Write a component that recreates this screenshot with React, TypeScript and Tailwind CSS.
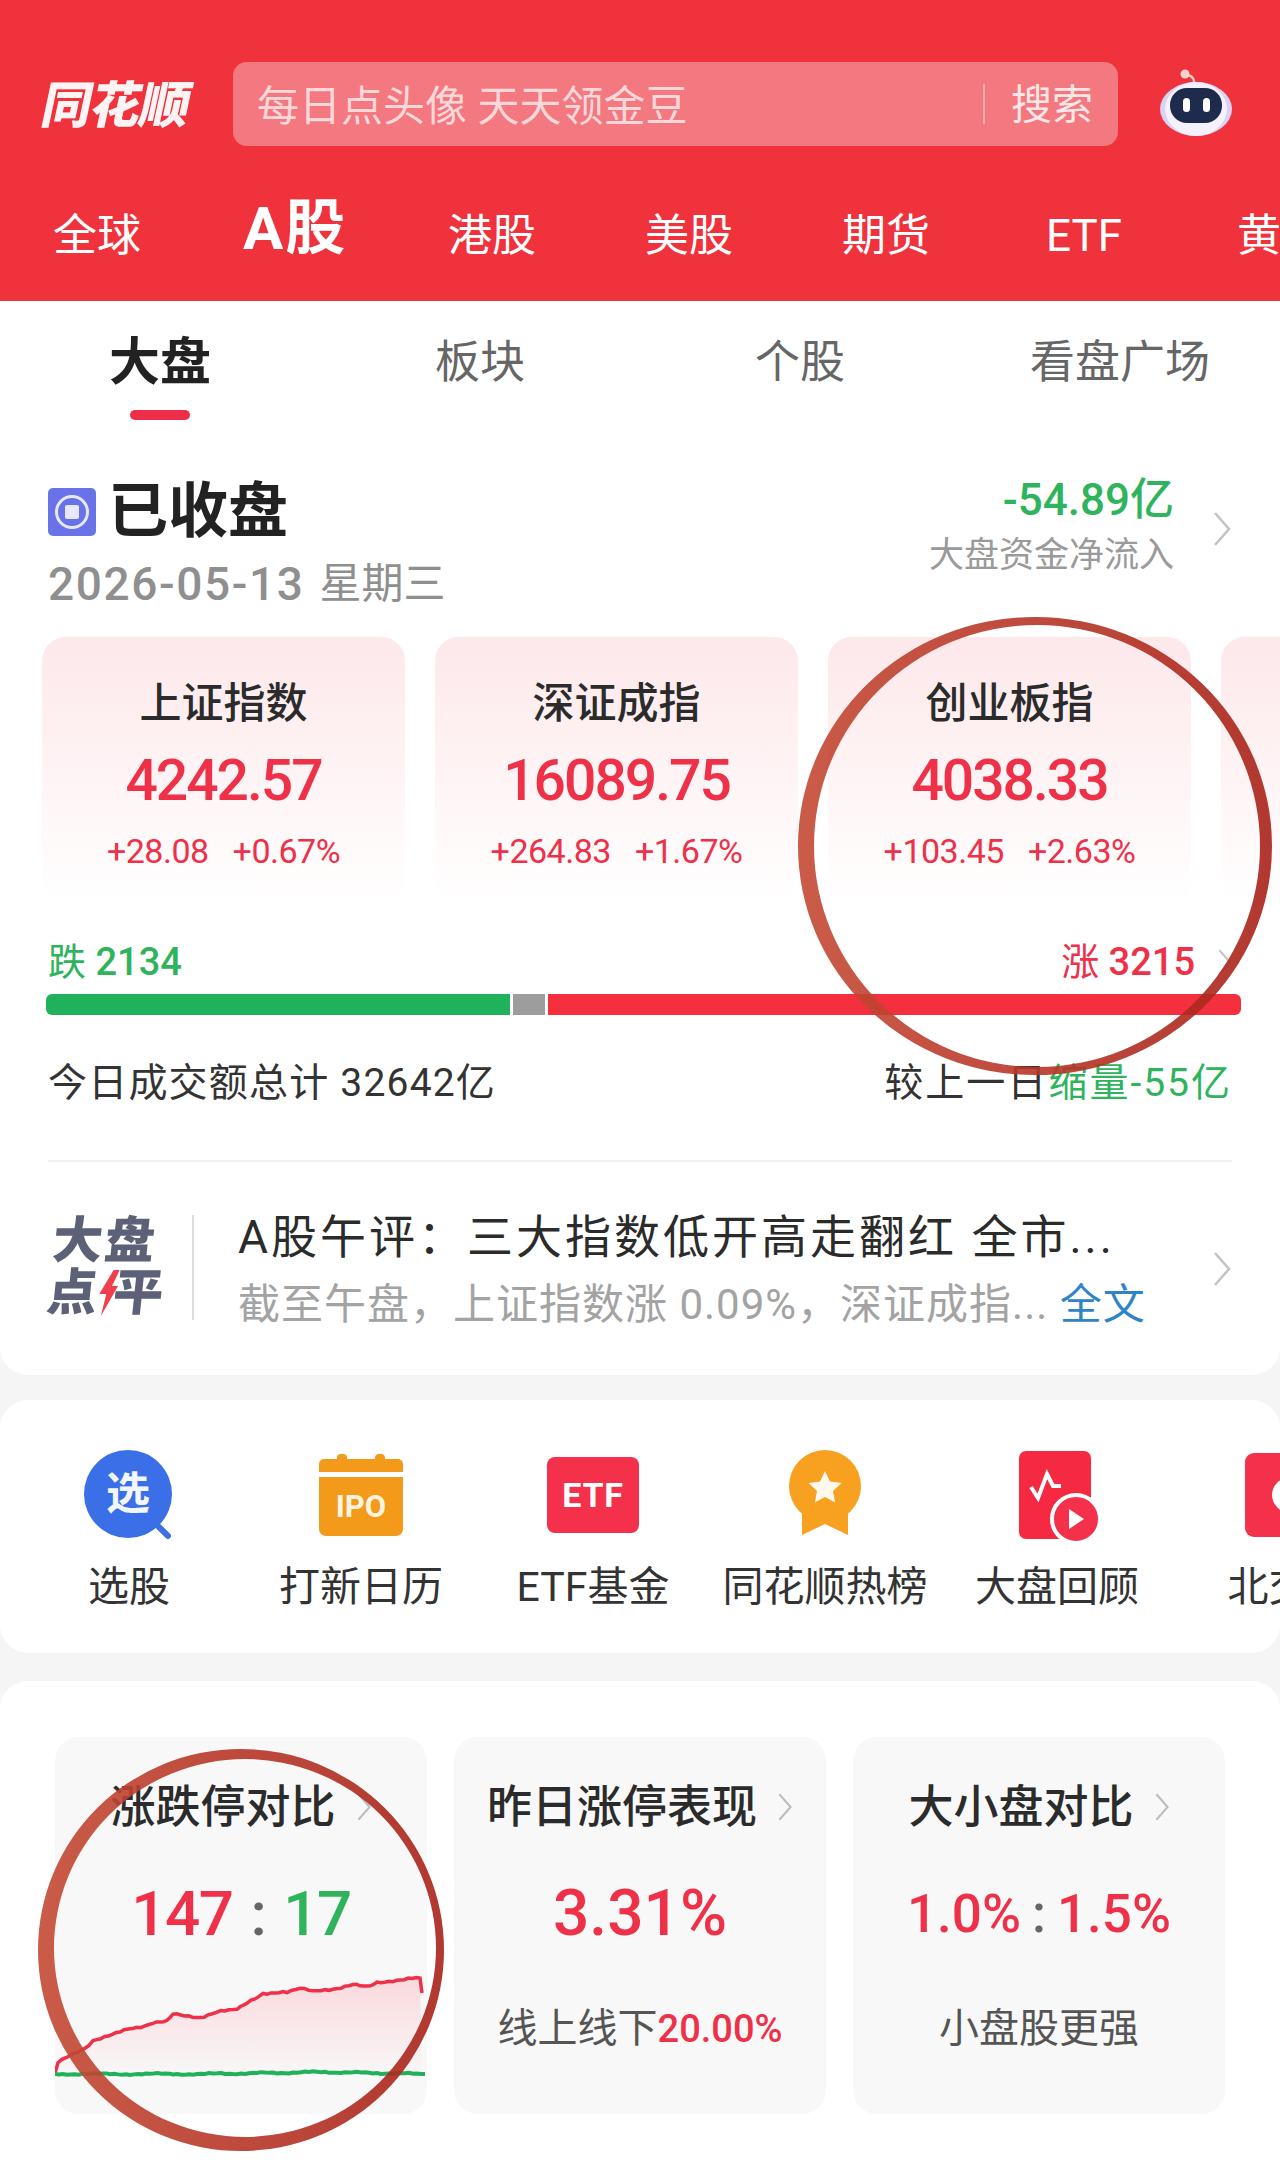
import type { ReactNode } from "react";

const red = "text-[#ee3048]";
const green = "text-[#2fb35c]";

const markets = [
  { label: "全球", cls: "ml-[53px] w-[89px] text-[44px]" },
  { label: "A股", cls: "ml-[101px] w-[105px] text-[60px] font-bold -mt-[14px] tracking-[2px]" },
  { label: "港股", cls: "ml-[100px] w-[89px] text-[44px]" },
  { label: "美股", cls: "ml-[108px] w-[89px] text-[44px]" },
  { label: "期货", cls: "ml-[108px] w-[89px] text-[44px]" },
  { label: "ETF", cls: "ml-[115px] w-[78px] text-[44px]" },
  { label: "黄金", cls: "ml-[113px] w-[89px] text-[44px]" },
];

const indexes = [
  { name: "上证指数", value: "4242.57", diff: "+28.08", pct: "+0.67%" },
  { name: "深证成指", value: "16089.75", diff: "+264.83", pct: "+1.67%" },
  { name: "创业板指", value: "4038.33", diff: "+103.45", pct: "+2.63%" },
  { name: "", value: "", diff: "", pct: "" },
];

// key points of the limit-up curve, jittered so it looks like real tick data
const limitUp = [
  [0, 103], [3, 93], [15, 85], [30, 78], [38, 70], [65, 62], [98, 53], [112, 50], [118, 44], [145, 47],
  [182, 38], [192, 33], [208, 23], [232, 23], [245, 17], [258, 22], [298, 15], [312, 16], [322, 12], [365, 8],
];

function jitter(points: number[][], amount: number) {
  const out: number[][] = [];
  for (let i = 0; i < points.length - 1; i++) {
    const [x1, y1] = points[i];
    const [x2, y2] = points[i + 1];
    const steps = Math.max(1, Math.round((x2 - x1) / 4));
    for (let s = 0; s < steps; s++) {
      const x = x1 + ((x2 - x1) * s) / steps;
      const y = y1 + ((y2 - y1) * s) / steps;
      out.push([x, y + Math.sin(x * 1.7) * amount + Math.sin(x * 0.6) * amount * 0.6]);
    }
  }
  out.push(points[points.length - 1]);
  return out;
}

function Chevron({ className, color = "#bdbdbd" }: { className: string; color?: string }) {
  return (
    <svg viewBox="0 0 20 36" className={className} fill="none">
      <path d="M3 2l14 16L3 34" stroke={color} strokeWidth="2.6" />
    </svg>
  );
}

function Robot() {
  return (
    <svg viewBox="0 0 72 68" className="h-[68px] w-[72px]">
      <path d="M34 17c1-7-3-10-8-10" stroke="#f6c9c4" strokeWidth="2.5" fill="none" />
      <circle cx="25" cy="6" r="4.500" fill="#f9d2cf" />
      <ellipse cx="36" cy="41" rx="36" ry="27" fill="#d9d2f4" />
      <ellipse cx="36" cy="41" rx="31" ry="27" fill="#f4f1fd" />
      <rect x="10" y="20" width="52" height="35" rx="17" fill="#1f2b4d" />
      <rect x="23" y="30" width="7" height="14" rx="3.5" fill="#fff" />
      <rect x="43" y="30" width="7" height="14" rx="3.5" fill="#fff" />
    </svg>
  );
}

function ShortcutIcon({ kind }: { kind: string }) {
  if (kind === "pick")
    return (
      <div className="relative h-[90px] w-[90px]">
        <div className="flex h-[88px] w-[88px] items-center justify-center rounded-full bg-[#3b6fe8] text-[44px] font-bold text-[#f2f6ff]">
          选
        </div>
        <div className="absolute right-[1px] bottom-[6px] h-[6px] w-[20px] rotate-45 rounded-sm bg-[#3b6fe8]" />
      </div>
    );
  if (kind === "ipo")
    return (
      <div className="relative mt-[4px] flex h-[82px] w-[84px] flex-col">
        <div className="absolute top-0 left-[18px] h-[8px] w-[10px] rounded-t-sm bg-[#f39a1b]" />
        <div className="absolute top-0 right-[18px] h-[8px] w-[10px] rounded-t-sm bg-[#f39a1b]" />
        <div className="mt-[5px] h-[13px] rounded-t-[5px] bg-[#f39a1b]" />
        <div className="mt-[5px] flex h-[59px] items-center justify-center rounded-b-[7px] bg-[#f39a1b] text-[31px] leading-none font-bold text-[#fff4e0]">
          IPO
        </div>
      </div>
    );
  if (kind === "etf")
    return (
      <div className="mt-[7px] flex h-[76px] w-[92px] items-center justify-center rounded-[8px] bg-[#f4304a] text-[34px] font-bold tracking-wide text-white">
        ETF
      </div>
    );
  if (kind === "medal")
    return (
      <svg viewBox="0 0 72 86" className="h-[86px] w-[72px]">
        <path d="M13 52h46v33L36 74 13 85z" fill="#f8a020" />
        <ellipse cx="36" cy="36" rx="36" ry="36" fill="#f8a020" />
        <path
          d="M36 21l5 10.5 11.5 1.5-8.5 8 2.2 11.5L36 47l-10.2 5.5L28 41l-8.500-8L31 31.500z"
          fill="#fff8ec"
        />
      </svg>
    );
  if (kind === "review")
    return (
      <svg viewBox="0 0 82 94" className="ml-[5px] h-[94px] w-[82px]">
        <rect x="0" y="1" width="72" height="88" rx="7" fill="#f52a42" />
        <path d="M12 37l7 11 9-24 6 12h8" stroke="#fff" strokeWidth="4" fill="none" />
        <circle cx="57" cy="69" r="24" fill="#f4304a" stroke="#fff" strokeWidth="4" />
        <path d="M50 59l15 10-15 10z" fill="#fff" />
      </svg>
    );
  return (
    <div className="mt-[3px] flex h-[84px] w-[88px] items-center justify-center rounded-[9px] bg-[#f4304a]">
      <div className="h-[34px] w-[34px] rotate-45 rounded-full rounded-br-none bg-white" />
    </div>
  );
}

const shortcuts = [
  { label: "选股", kind: "pick" },
  { label: "打新日历", kind: "ipo" },
  { label: "ETF基金", kind: "etf" },
  { label: "同花顺热榜", kind: "medal" },
  { label: "大盘回顾", kind: "review" },
  { label: "北交所", kind: "bj" },
];

function StatCard({ title, children }: { title: string; children: ReactNode }) {
  return (
    <div className="h-[377px] w-[372px] shrink-0 rounded-[24px] bg-[#f8f8f8] pt-[46px]">
      <div className="flex h-[48px] items-center justify-center gap-[20px] text-[45px] leading-none font-medium text-[#2b2b2b]">
        {title}
        <Chevron className="h-[30px] w-[16px]" />
      </div>
      {children}
    </div>
  );
}

function LimitChart() {
  const up = jitter(limitUp, 0.9);
  const down = jitter(
    [
      [0, 104],
      [150, 104],
      [270, 102],
      [370, 104],
    ],
    0.6,
  );
  const line = (pts: number[][]) => pts.map((p) => p.join(",")).join(" ");
  return (
    <svg viewBox="0 0 372 120" className="mt-[16px] h-[120px] w-[372px]">
      <defs>
        <linearGradient id="limit-fill" x1="0" y1="0" x2="0" y2="1">
          <stop offset="0" stopColor="#fad9dd" />
          <stop offset="1" stopColor="#fad9dd" stopOpacity="0.05" />
        </linearGradient>
      </defs>
      <polygon points={`${line(up)} 367,103 0,103`} fill="url(#limit-fill)" />
      <polyline points={`${line(up)} 367,23`} fill="none" stroke="#ee3048" strokeWidth="3.500" />
      <polyline points={line(down)} fill="none" stroke="#1fb25a" strokeWidth="4" />
    </svg>
  );
}

export default function App() {
  return (
    <div className="relative h-[2166px] w-[1280px] overflow-hidden bg-[#f5f5f5] font-['Roboto','Noto_Sans_CJK_SC',sans-serif]">
      {/* red header */}
      <header className="h-[301px] bg-[#ef323c] text-white">
        <div className="flex h-[146px] items-start pt-[62px]">
          <div className="ml-[40px] flex h-[84px] w-[153px] -skew-x-12 items-center justify-center pt-[3px] text-[50px] leading-none font-black tracking-[-1px] text-[#fff4f4]">
            同花顺
          </div>
          <div className="ml-[40px] flex h-[84px] w-[885px] items-center rounded-[14px] bg-[#f37880] pl-[24px] text-[42px] text-[#fcd7d9]">
            <span className="flex-1 pt-[4px]">每日点头像 天天领金豆</span>
            <span className="h-[40px] w-[2px] bg-[#f9abaf]" />
            <span className="mr-[25px] ml-[26px] pt-[4px] text-[41px] text-[#fde6e7]">搜索</span>
          </div>
          <div className="mt-[6px] ml-[42px]">
            <Robot />
          </div>
        </div>
        <nav className="flex h-[155px] items-center overflow-hidden pt-[24px] whitespace-nowrap">
          {markets.map((m) => (
            <span key={m.label} className={`shrink-0 leading-none ${m.cls}`}>
              {m.label}
            </span>
          ))}
        </nav>
      </header>

      {/* market overview */}
      <section className="h-[1074px] rounded-b-[28px] bg-white">
        <div className="grid h-[122px] grid-cols-4 text-[45px] leading-[60px] text-[#666]">
          {["大盘", "板块", "个股", "看盘广场"].map((t, i) => (
            <div key={t} className="flex flex-col items-center pt-[32px]">
              {i === 0 ? <span className="text-[51px] font-bold text-[#222]">{t}</span> : <span>{t}</span>}
              {i === 0 && <span className="mt-[17px] h-[10px] w-[60px] rounded-full bg-[#ee2e48]" />}
            </div>
          ))}
        </div>

        <div className="flex h-[214px] justify-between px-[48px]">
          <div className="pt-[59px]">
            <div className="flex h-[60px] items-center gap-[12px] text-[60px] leading-none font-bold text-[#222]">
              <span className="flex h-[48px] w-[48px] items-center justify-center rounded-[5px] bg-[#6a72e8]">
                <span className="flex h-[34px] w-[34px] items-center justify-center rounded-full border-[3px] border-[#e6e8ff]">
                  <span className="h-[14px] w-[14px] rounded-[2px] bg-[#e6e8ff]" />
                </span>
              </span>
              已收盘
            </div>
            <div className="mt-[18px] flex h-[48px] items-center gap-[15px] text-[#8f8f8f]">
              <span className="text-[46px] leading-none font-medium tracking-[1.6px]">2026-05-13</span>
              <span className="text-[42px] leading-none">星期三</span>
            </div>
          </div>
          <div className="flex items-start gap-[38px] pt-[52px]">
            <div className="flex flex-col items-end">
              <span className={`h-[50px] text-[44px] leading-[50px] font-medium ${green}`}>-54.89亿</span>
              <span className="mt-[9px] text-[35px] leading-[44px] text-[#9a9a9a]">大盘资金净流入</span>
            </div>
            <Chevron className="mt-[36px] h-[36px] w-[20px]" color="#c4c4c4" />
          </div>
        </div>

        <div className="flex gap-[30px] pl-[42px]">
          {indexes.map((x, i) => (
            <div
              key={i}
              className="h-[269px] w-[363px] shrink-0 rounded-[24px] bg-linear-to-b from-[#fde8ea] to-white pt-[43px] text-center"
            >
              <div className="h-[48px] text-[42px] leading-[48px] font-medium text-[#2b2b2b]">{x.name}</div>
              <div className={`mt-[18px] h-[70px] text-[57px] leading-[70px] font-medium tracking-[-2px] ${red}`}>
                {x.value}
              </div>
              <div className={`mt-[15px] flex h-[40px] items-center justify-center gap-[24px] text-[34px] tracking-[-0.5px] ${red}`}>
                <span>{x.diff}</span>
                <span>{x.pct}</span>
              </div>
            </div>
          ))}
        </div>

        <div className="mt-[31px] flex h-[50px] items-center justify-between px-[48px] text-[38px] leading-none">
          <span className={green}>
            跌 <span className="font-medium">2134</span>
          </span>
          <span className={`flex items-center gap-[22px] ${red}`}>
            <span>
              涨 <span className="font-medium">3215</span>
            </span>
            <Chevron className="h-[34px] w-[15px]" color="#c4c4c4" />
          </span>
        </div>
        <div className="mt-[7px] mr-[39px] ml-[46px] flex h-[21px] gap-[3px] overflow-hidden rounded-[6px]">
          <div className="w-[464px] bg-[#1fb25a]" />
          <div className="w-[32px] bg-[#9d9d9d]" />
          <div className="flex-1 bg-[#f5303e]" />
        </div>

        <div className="mt-[43px] flex h-[50px] items-center justify-between px-[48px] text-[39px] leading-none text-[#333]">
          <span className="tracking-[1.2px]">今日成交额总计 32642亿</span>
          <span className="tracking-[2px]">
            较上一日<span className={green}>缩量-55亿</span>
          </span>
        </div>
        <div className="mx-[48px] mt-[52px] h-[2px] bg-[#f0f0f0]" />

        <div className="flex pt-[53px] pr-[48px] pl-[50px]">
          <div className="flex h-[105px] w-[112px] shrink-0 -skew-x-6 flex-col text-[50px] leading-[52px] font-black text-[#5c6178]">
            <span className="tracking-[2px]">大盘</span>
            <span className="flex items-center">
              点
              <svg viewBox="0 0 20 46" className="h-[48px] w-[20px] shrink-0">
                <path d="M14 0h6l-6 16h6L6 46l3-22H2z" fill="#f23f4c" />
              </svg>
              <span className="-ml-[4px]">平</span>
            </span>
          </div>
          <div className="ml-[30px] h-[105px] w-[2px] shrink-0 bg-[#dcdcdc]" />
          <div className="ml-[44px]">
            <div className="-mt-[3px] h-[50px] text-[46px] leading-[50px] tracking-[3px] whitespace-nowrap text-[#2b2b2b]">
              A股午评：三大指数低开高走翻红 全市...
            </div>
            <div className="mt-[18px] h-[50px] text-[42px] leading-[50px] tracking-[1px] whitespace-nowrap text-[#a3a3a3]">
              截至午盘，上证指数涨 0.09%，深证成指... <span className="text-[#2f83c9]">全文</span>
            </div>
          </div>
          <Chevron className="mt-[36px] ml-auto h-[36px] w-[20px] shrink-0" color="#c4c4c4" />
        </div>
      </section>

      {/* shortcuts */}
      <section className="mt-[25px] flex h-[253px] overflow-hidden rounded-[28px] bg-white pl-[13px]">
        {shortcuts.map((s) => (
          <div key={s.label} className="flex w-[232px] shrink-0 flex-col items-center pt-[50px]">
            <div className="flex h-[90px] items-start justify-center">
              <ShortcutIcon kind={s.kind} />
            </div>
            <div className="mt-[22px] h-[50px] text-[41px] leading-[50px] whitespace-nowrap text-[#333]">{s.label}</div>
          </div>
        ))}
      </section>

      {/* stat cards */}
      <section className="mt-[28px] flex h-[485px] gap-[27px] rounded-t-[28px] bg-white pt-[56px] pl-[55px]">
        <StatCard title="涨跌停对比">
          <div className="mt-[43px] flex h-[80px] items-center justify-center gap-[18px] text-[62px] leading-none font-medium tracking-[-1.500px]">
            <span className={red}>147</span>
            <span className="text-[#666]">:</span>
            <span className={green}>17</span>
          </div>
          <LimitChart />
        </StatCard>
        <StatCard title="昨日涨停表现">
          <div className={`mt-[43px] h-[80px] text-center text-[64px] leading-[80px] font-medium ${red}`}>3.31%</div>
          <div className="mt-[50px] h-[50px] text-center text-[40px] leading-[50px] text-[#555]">
            线上线下<span className={`text-[38px] font-medium ${red}`}>20.00%</span>
          </div>
        </StatCard>
        <StatCard title="大小盘对比">
          <div className={`mt-[43px] flex h-[80px] items-center justify-center gap-[11px] text-[53px] leading-none font-medium ${red}`}>
            <span>1.0%</span>
            <span className="text-[#666]">:</span>
            <span>1.5%</span>
          </div>
          <div className="mt-[50px] h-[50px] text-center text-[40px] leading-[50px] text-[#555]">小盘股更强</div>
        </StatCard>
      </section>

      {/* hand-drawn circles on top of the screenshot */}
      <svg viewBox="0 0 480 470" className="pointer-events-none absolute top-[612px] left-[795px] h-[470px] w-[480px]">
        <defs>
          <linearGradient id="pen-a" x1="0" y1="0" x2="1" y2="0">
            <stop offset="0" stopColor="#c44a35" />
            <stop offset="1" stopColor="#a9231a" />
          </linearGradient>
        </defs>
        <path
          fillRule="evenodd"
          fill="url(#pen-a)"
          fillOpacity="0.9"
          d="M3 234a237 229 0 1 0 474 0a237 229 0 1 0-474 0zM19 234a223 221 0 1 0 446 0a223 221 0 1 0-446 0z"
        />
      </svg>
      <svg viewBox="0 0 412 410" className="pointer-events-none absolute top-[1745px] left-[35px] h-[410px] w-[412px]">
        <defs>
          <linearGradient id="pen-b" x1="0" y1="0" x2="1" y2="0">
            <stop offset="0" stopColor="#c44a35" />
            <stop offset="1" stopColor="#a9231a" />
          </linearGradient>
        </defs>
        <path
          fillRule="evenodd"
          fill="url(#pen-b)"
          fillOpacity="0.9"
          d="M3 205a203 201 0 1 0 406 0a203 201 0 1 0-406 0zM19 203a191 189 0 1 0 382 0a191 189 0 1 0-382 0z"
        />
      </svg>
    </div>
  );
}
